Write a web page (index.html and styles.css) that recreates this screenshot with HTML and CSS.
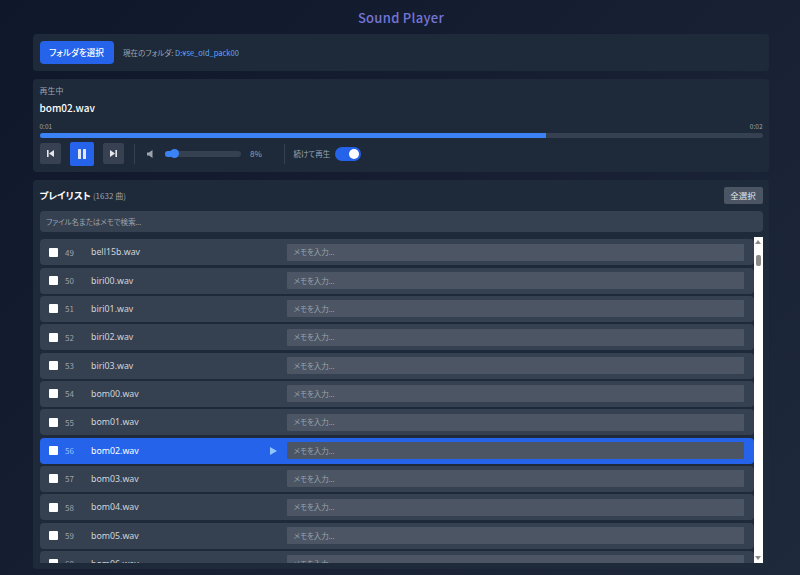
FILE: index.html
```html
<!DOCTYPE html>
<html lang="ja">
<head>
<meta charset="utf-8">
<title>Sound Player</title>
<link rel="stylesheet" href="styles.css">
</head>
<body>
<main class="app">
  <h1 class="title">Sound Player</h1>
  <section class="panel folder">
    <button class="primary">フォルダを選択</button>
    <span class="path">現在のフォルダ: <span class="path-value">D:¥se_old_pack00</span></span>
  </section>
  <section class="panel player">
    <div class="label">再生中</div>
    <div class="now">bom02.wav</div>
    <div class="times"><span>0:01</span><span>0:02</span></div>
    <div class="progress"><div class="progress-fill" style="width:70%"></div></div>
    <div class="controls">
      <button class="ctl"><svg width="9" height="9" viewBox="0 0 9 9"><rect x="1" y="1" width="1.6" height="7" fill="#e5e7eb"/><path d="M8 1v7L3 4.5z" fill="#e5e7eb"/></svg></button>
      <button class="ctl play"><svg width="10" height="12" viewBox="0 0 10 12"><rect x="1" y="1" width="3" height="10" rx=".5" fill="#e5e7eb"/><rect x="6" y="1" width="3" height="10" rx=".5" fill="#e5e7eb"/></svg></button>
      <button class="ctl"><svg width="9" height="9" viewBox="0 0 9 9"><path d="M1 1v7l5-3.5z" fill="#e5e7eb"/><rect x="6.4" y="1" width="1.6" height="7" fill="#e5e7eb"/></svg></button>
      <span class="sep"></span>
      <svg class="vol-icon" width="6" height="8" viewBox="0 0 6 8"><path d="M0 2.5h2L5.5 0v8L2 5.5H0z" fill="#9ca3af"/></svg>
      <div class="slider"><div class="slider-fill"></div><div class="slider-knob"></div></div>
      <span class="pct">8%</span>
      <span class="sep sep2"></span>
      <span class="cont">続けて再生</span>
      <span class="toggle"><span class="toggle-knob"></span></span>
    </div>
  </section>
  <section class="panel playlist">
    <div class="pl-head">
      <h2 class="pl-title">プレイリスト <span class="pl-count">(1632 曲)</span></h2>
      <button class="all">全選択</button>
    </div>
    <input class="search" placeholder="ファイル名またはメモで検索...">
    <div class="list-wrap">
      <div class="list">
        <div class="row"><span class="check"></span><span class="num">49</span><span class="name">bell15b.wav</span><span class="mark"></span><input class="memo" placeholder="メモを入力..."></div>
        <div class="row"><span class="check"></span><span class="num">50</span><span class="name">biri00.wav</span><span class="mark"></span><input class="memo" placeholder="メモを入力..."></div>
        <div class="row"><span class="check"></span><span class="num">51</span><span class="name">biri01.wav</span><span class="mark"></span><input class="memo" placeholder="メモを入力..."></div>
        <div class="row"><span class="check"></span><span class="num">52</span><span class="name">biri02.wav</span><span class="mark"></span><input class="memo" placeholder="メモを入力..."></div>
        <div class="row"><span class="check"></span><span class="num">53</span><span class="name">biri03.wav</span><span class="mark"></span><input class="memo" placeholder="メモを入力..."></div>
        <div class="row"><span class="check"></span><span class="num">54</span><span class="name">bom00.wav</span><span class="mark"></span><input class="memo" placeholder="メモを入力..."></div>
        <div class="row"><span class="check"></span><span class="num">55</span><span class="name">bom01.wav</span><span class="mark"></span><input class="memo" placeholder="メモを入力..."></div>
        <div class="row active"><span class="check"></span><span class="num">56</span><span class="name">bom02.wav</span><span class="mark"><svg width="7" height="8" viewBox="0 0 7 8"><path d="M0 0l7 4-7 4z" fill="#93c5fd"/></svg></span><input class="memo" placeholder="メモを入力..."></div>
        <div class="row"><span class="check"></span><span class="num">57</span><span class="name">bom03.wav</span><span class="mark"></span><input class="memo" placeholder="メモを入力..."></div>
        <div class="row"><span class="check"></span><span class="num">58</span><span class="name">bom04.wav</span><span class="mark"></span><input class="memo" placeholder="メモを入力..."></div>
        <div class="row"><span class="check"></span><span class="num">59</span><span class="name">bom05.wav</span><span class="mark"></span><input class="memo" placeholder="メモを入力..."></div>
        <div class="row"><span class="check"></span><span class="num">60</span><span class="name">bom06.wav</span><span class="mark"></span><input class="memo" placeholder="メモを入力..."></div>
      </div>
      <div class="scrollbar">
        <span class="arrow up"></span>
        <span class="thumb"></span>
        <span class="arrow down"></span>
      </div>
    </div>
  </section>
</main>
</body>
</html>
```
FILE: styles.css
```css
* { box-sizing: border-box; }
html, body { height: 100%; }
body {
  margin: 0;
  height: 575px;
  overflow: hidden;
  background: linear-gradient(135deg, #0f172a 0%, #1e293b 100%);
  font-family: "Noto Sans CJK JP", "Noto Sans", sans-serif;
  font-feature-settings: "palt";
  color: #e5e7eb;
}
.app {
  width: 736px;
  margin-left: 33px;
  display: flex;
  flex-direction: column;
  gap: 8px;
}
.title {
  margin: 0;
  height: 26px;
  padding-top: 8px;
  font-size: 13px;
  line-height: 20px;
  font-weight: 500;
  text-align: center;
  color: #7475d6;
  letter-spacing: 0.3px;
}
.panel {
  background: #1e2a3a;
  border-radius: 4px;
  padding: 7px 6.5px;
}
.folder {
  height: 37px;
  display: flex;
  align-items: center;
  gap: 9.5px;
}
.primary {
  width: 74px;
  height: 23px;
  border: 0;
  padding: 0;
  border-radius: 4px;
  background: #2563eb;
  color: #fff;
  font: 500 8.6px/1 "Noto Sans CJK JP", sans-serif;
  font-feature-settings: "palt";
}
.path { font-size: 7.5px; color: #9ca3af; }
.path-value { color: #60a5fa; }
.player { height: 93px; padding-top: 6px; }
.label { font-size: 8px; line-height: 12px; color: #9ca3af; }
.now { margin-top: 3px; font-size: 10px; line-height: 16px; font-weight: 500; color: #fff; }
.times {
  margin-top: 6px;
  display: flex;
  justify-content: space-between;
  font-size: 6.5px;
  line-height: 9px;
  color: #9ca3af;
}
.progress {
  margin-top: 2px;
  height: 4.5px;
  border-radius: 3px;
  background: #354050;
  overflow: hidden;
}
.progress-fill { height: 100%; background: #3b82f6; }
.controls {
  margin-top: 4px;
  display: flex;
  align-items: center;
  height: 24px;
}
.ctl {
  width: 21px;
  height: 21px;
  padding: 0;
  border: 0;
  border-radius: 2px;
  background: #374151;
  display: flex;
  align-items: center;
  justify-content: center;
}
.play {
  width: 24px;
  height: 24px;
  margin: 0 9px;
  background: #2563eb;
}
.sep { width: 1px; height: 20px; background: #354050; margin-left: 10px; }
.vol-icon { margin-left: 12px; }
.slider {
  position: relative;
  width: 76px;
  height: 6px;
  margin-left: 12px;
  border-radius: 3px;
  background: #354050;
}
.slider-fill { width: 8px; height: 100%; border-radius: 3px; background: #3b82f6; }
.slider-knob {
  position: absolute;
  left: 5px;
  top: -1.5px;
  width: 9px;
  height: 9px;
  border-radius: 50%;
  background: #3b82f6;
}
.pct { margin-left: 9.5px; width: 23.5px; font-size: 8px; color: #9ca3af; }
.sep2 { margin-left: 10px; }
.cont { margin-left: 9px; font-size: 7.5px; color: #9ca3af; }
.toggle {
  margin-left: 4.5px;
  width: 26px;
  height: 14px;
  border-radius: 7px;
  background: #2563eb;
  display: flex;
  align-items: center;
  justify-content: flex-end;
  padding-right: 2px;
}
.toggle-knob { width: 10px; height: 10px; border-radius: 50%; background: #fff; }
.playlist { height: 389px; padding-top: 7px; padding-bottom: 6px; }
.pl-head {
  height: 17px;
  display: flex;
  align-items: center;
  justify-content: space-between;
}
.pl-title { margin: 0; font-size: 9.5px; line-height: 16px; font-weight: 700; color: #fff; }
.pl-count { font-size: 8px; font-weight: 400; color: #9ca3af; }
.all {
  width: 39px;
  height: 17px;
  padding: 0;
  border: 0;
  border-radius: 2px;
  background: #4b5563;
  color: #e5e7eb;
  font: 400 8.5px/1 "Noto Sans CJK JP", sans-serif;
}
.search {
  display: block;
  width: 100%;
  height: 21px;
  margin-top: 7px;
  padding: 0 6.5px 1px;
  border: 0;
  border-radius: 4px;
  background: #354050;
  color: #e5e7eb;
  font: 400 7.5px "Noto Sans CJK JP", sans-serif;
  font-feature-settings: "palt";
  letter-spacing: -0.1px;
}
.search::placeholder { color: #9ca3af; opacity: 1; }
.list-wrap {
  margin-top: 5px;
  height: 326px;
  display: flex;
}
.list {
  flex: 1;
  min-width: 0;
  overflow: hidden;
  padding-top: 2.3px;
  display: flex;
  flex-direction: column;
  gap: 2.33px;
}
.row {
  flex: none;
  height: 26px;
  display: flex;
  align-items: center;
  border-radius: 4px;
  background: #354050;
  padding-left: 9.5px;
  color: #d1d5db;
}
.active { background: #2563eb; color: #fff; }
.check { width: 9px; height: 9px; background: #fff; border-radius: 1px; }
.num { margin-left: 7px; width: 26px; font-size: 8px; color: #9ca3af; }
.active .num { color: #93c5fd; }
.name { width: 179px; font-size: 8.8px; font-family: "Noto Sans", sans-serif; }
.mark { width: 17px; display: flex; align-items: center; }
.memo {
  width: 457px;
  height: 17px;
  padding: 0 6.5px 1px;
  border: 0;
  border-radius: 1px;
  background: #4b5563;
  color: #e5e7eb;
  font: 400 7.5px "Noto Sans CJK JP", sans-serif;
  font-feature-settings: "palt";
  letter-spacing: -0.1px;
}
.memo::placeholder { color: #9ca3af; opacity: 1; }
.scrollbar {
  flex: none;
  width: 9px;
  background: #fff;
  display: flex;
  flex-direction: column;
  align-items: center;
  justify-content: flex-start;
  padding: 3px 0;
}
.arrow { width: 0; height: 0; border-left: 3px solid transparent; border-right: 3px solid transparent; }
.up { border-bottom: 4px solid #8a8a8a; }
.down { border-top: 4px solid #8a8a8a; margin-top: auto; }
.thumb { width: 5px; height: 11px; margin-top: 11px; border-radius: 2px; background: #8a8a8a; }
```
